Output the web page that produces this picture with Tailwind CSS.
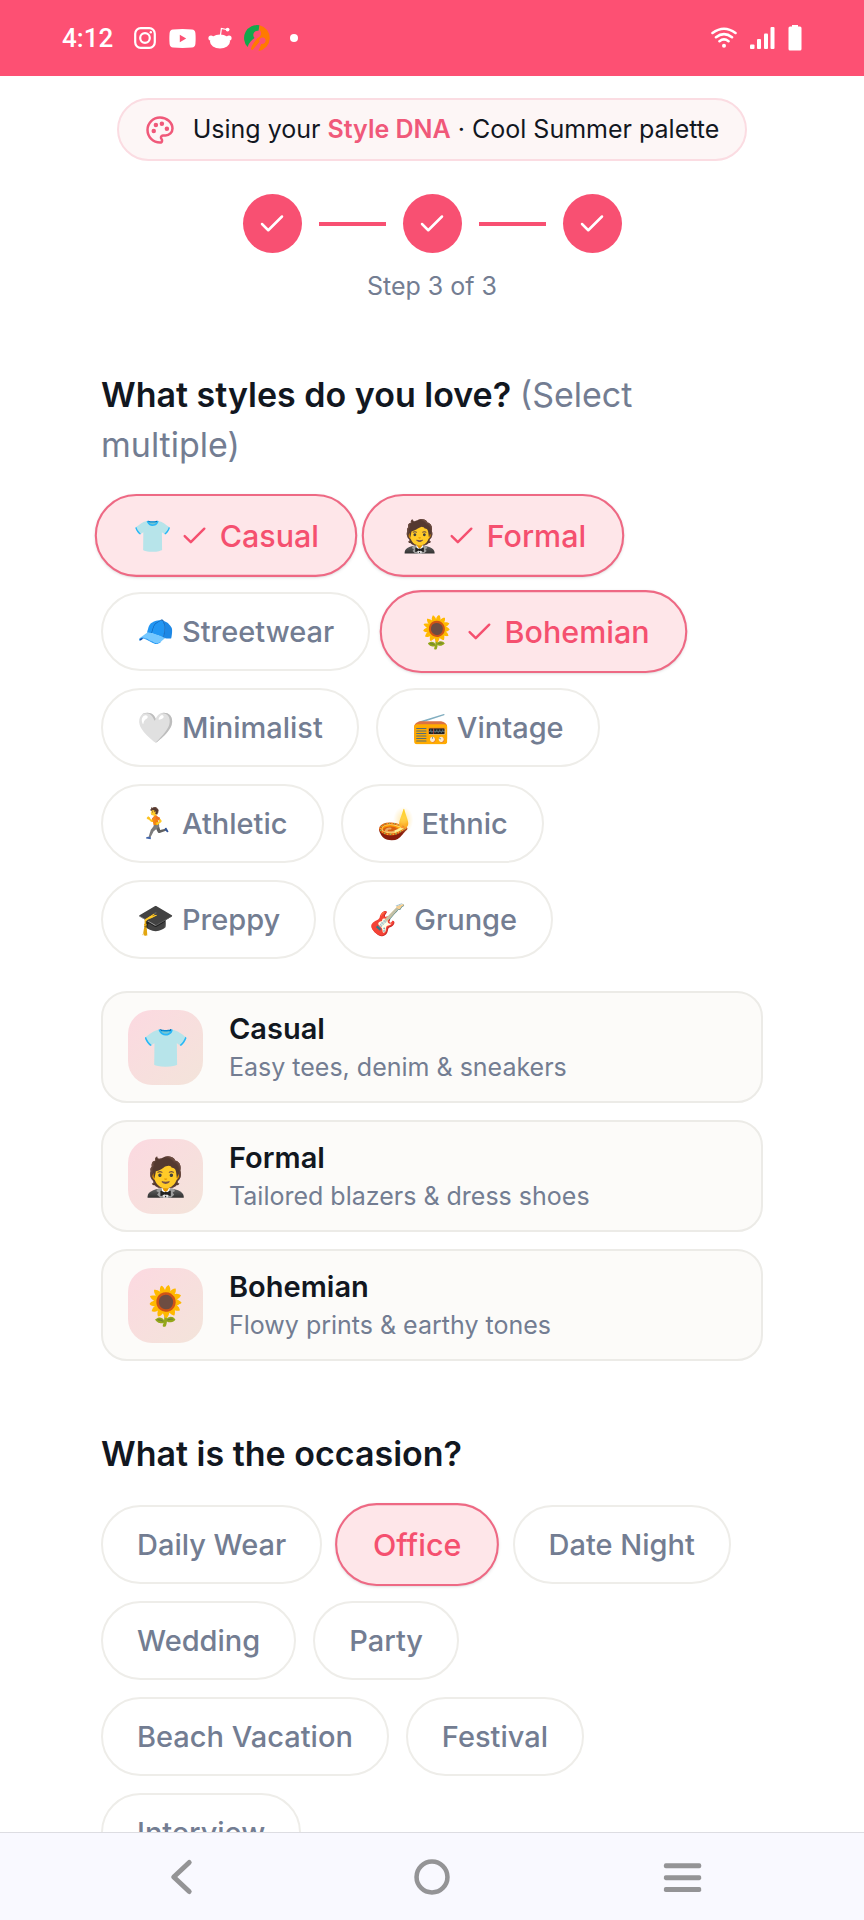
<!DOCTYPE html>
<html lang="en">
<head>
  <meta charset="UTF-8" />
  <meta name="viewport" content="width=device-width, initial-scale=1" />
  <title>Style Quiz</title>
  <script src="https://cdn.jsdelivr.net/npm/@tailwindcss/browser@4"></script>
</head>
<body class="flex h-screen flex-col overflow-hidden bg-white font-['Inter',sans-serif] text-[#12171f]">

  <!-- Shared shapes -->
  <svg class="hidden" aria-hidden="true">
    <symbol id="check" viewBox="0 0 24 24">
      <path d="M20 6 9 17l-5-5" fill="none" stroke="currentColor" stroke-width="2" stroke-linecap="round" stroke-linejoin="round" />
    </symbol>
  </svg>

  <!-- Status bar -->
  <header class="flex h-[76px] shrink-0 items-center justify-between bg-[#fd5073] px-[62px] text-white">
    <div class="flex items-center">
      <span class="font-['Roboto',sans-serif] text-[26px] leading-8 font-medium">4:12</span>
      <svg class="ml-5 size-6" viewBox="0 0 24 24" fill="none" stroke="currentColor" stroke-width="2.2">
        <rect x="2.2" y="2.2" width="19.6" height="19.6" rx="5.5" />
        <circle cx="12" cy="12" r="4.8" />
        <circle cx="17.8" cy="6.2" r="1.2" fill="currentColor" stroke="none" />
      </svg>
      <svg class="ml-3 h-[19px] w-[27px]" viewBox="0 0 27 19" fill="currentColor">
        <path fill-rule="evenodd" d="M4 .5Q13.5-.3 23 .5 26 .8 26.400 4 26.900 9.500 26.400 15 26 18.200 23 18.500 13.500 19.300 4 18.500 1 18.200.6 15 .1 9.500.6 4 1 .8 4 .5ZM10.800 5.800v7.400l6.400-3.700Z" />
      </svg>
      <svg class="ml-3 size-6" viewBox="0 0 24 24" fill="currentColor">
        <ellipse cx="12" cy="15.500" rx="10" ry="7" />
        <circle cx="3" cy="12" r="2.600" />
        <circle cx="21" cy="12" r="2.600" />
        <path d="M12.500 9 13.400 2.500 18.500 3.500" fill="none" stroke="currentColor" stroke-width="1.200" />
        <circle cx="19.600" cy="3.600" r="1.900" />
      </svg>
      <svg class="ml-3 size-[26px]" viewBox="0 0 26 26">
        <path d="M15.500.3A13 13 0 0 0 3.600 22C5 17.500 7.500 15.500 10.500 13 7.500 9.500 10.500 5 14.500 5.800Z" fill="#12a84c" />
        <path d="M15.500.3A13 13 0 0 1 14.500 25.900L17.200 19C21.500 19.500 23.200 14.500 20 12.800 17.200 11.500 14.500 14 15.600 16.800L8.500 25 6.800 24.200C8 20 10.500 16.500 13.500 13 17 12 18.500 7.500 15.500 5Z" fill="#ff7a00" />
      </svg>
      <span class="ml-5 size-2 rounded-full bg-white"></span>
    </div>
    <div class="flex items-center gap-[13px]">
      <svg class="h-[22px] w-[26px]" viewBox="0 0 26 22" fill="none" stroke="currentColor" stroke-width="2.600" stroke-linecap="round">
        <path d="M1.500 6Q13-2.500 24.500 6M5 10.200Q13 4 21 10.200M8.500 14.200Q13 10.600 17.500 14.200" />
        <circle cx="13" cy="18.700" r="2" fill="currentColor" stroke="none" />
      </svg>
      <svg class="h-[22px] w-[25px]" viewBox="0 0 25 22" fill="currentColor">
        <rect y="17.500" width="4.500" height="4.500" rx="1" />
        <rect x="7" y="12" width="4" height="10" rx="1" />
        <rect x="14" y="6.500" width="4" height="15.500" rx="1" />
        <rect x="20.500" width="4" height="22" rx="1" />
      </svg>
      <svg class="h-[26px] w-[14px]" viewBox="0 0 14 26" fill="currentColor">
        <path d="M4 0h6v1.500H12a1.500 1.500 0 0 1 1.500 1.500V24a1.500 1.500 0 0 1-1.500 1.500H2A1.500 1.500 0 0 1 .5 24V3A1.500 1.500 0 0 1 2 1.500H4Z" />
      </svg>
    </div>
  </header>

  <main class="min-h-0 flex-1 overflow-hidden px-[101px] pt-[22px]">

    <!-- Style DNA banner -->
    <div class="mx-auto flex h-[63px] w-fit items-center gap-[18px] rounded-full border-2 border-[#fbdce2] bg-[#fdf6f6] px-[26px] text-[25px] whitespace-nowrap">
      <svg class="size-[30px] text-[#f0597a]" viewBox="0 0 24 24" fill="none" stroke="currentColor" stroke-width="2" stroke-linecap="round" stroke-linejoin="round">
        <path d="M12 2C6.500 2 2 6.500 2 12s4.500 10 10 10c.926 0 1.648-.746 1.648-1.688 0-.437-.18-.835-.437-1.125-.29-.289-.438-.652-.438-1.125a1.640 1.640 0 0 1 1.668-1.668h1.996c3.051 0 5.555-2.503 5.555-5.554C21.965 6.012 17.461 2 12 2z" />
        <circle cx="13.500" cy="7" r=".8" fill="currentColor" />
        <circle cx="17.500" cy="11" r=".8" fill="currentColor" />
        <circle cx="8.700" cy="8" r=".8" fill="currentColor" />
        <circle cx="7" cy="12.700" r=".8" fill="currentColor" />
      </svg>
      <p>Using your <span class="font-semibold text-[#f0597a]">Style DNA</span> · Cool Summer palette</p>
    </div>

    <!-- Progress -->
    <div class="mt-[33px] flex items-center justify-center gap-[17px] text-white">
      <span class="grid size-[59px] place-items-center rounded-full bg-[#f85072]"><svg class="size-[30px]"><use href="#check" /></svg></span>
      <span class="h-1 w-[67px] bg-[#f85072]"></span>
      <span class="grid size-[59px] place-items-center rounded-full bg-[#f85072]"><svg class="size-[30px]"><use href="#check" /></svg></span>
      <span class="h-1 w-[67px] bg-[#f85072]"></span>
      <span class="grid size-[59px] place-items-center rounded-full bg-[#f85072]"><svg class="size-[30px]"><use href="#check" /></svg></span>
    </div>
    <p class="mt-[15px] text-center text-[25px] leading-9 text-[#737d92]">Step 3 of 3</p>

    <!-- Styles -->
    <section class="mt-[66px]">
      <h2 class="text-[34px] leading-[50px] font-semibold">What styles do you love? <span class="font-normal text-[#737d92]">(Select multiple)</span></h2>
      <div class="mt-[26px] flex flex-wrap gap-[17px] text-[29px] leading-[43px] font-medium text-[#737d92]">
        <button type="button" aria-pressed="true" class="flex h-[79px] scale-105 items-center rounded-full border-2 border-[#ee6984] bg-[#fee6e9] px-[34px] text-[#f5506f] shadow-sm"><span class="mr-2 text-[30px]">👕</span><svg class="mr-[10px] size-7"><use href="#check" /></svg>Casual</button>
        <button type="button" aria-pressed="true" class="flex h-[79px] scale-105 items-center rounded-full border-2 border-[#ee6984] bg-[#fee6e9] px-[34px] text-[#f5506f] shadow-sm"><span class="mr-2 text-[30px]">🤵</span><svg class="mr-[10px] size-7"><use href="#check" /></svg>Formal</button>
        <button type="button" aria-pressed="false" class="flex h-[79px] items-center rounded-full border-2 border-[#eeede9] px-[34px]"><span class="mr-2 text-[30px]">🧢</span>Streetwear</button>
        <button type="button" aria-pressed="true" class="flex h-[79px] scale-105 items-center rounded-full border-2 border-[#ee6984] bg-[#fee6e9] px-[34px] text-[#f5506f] shadow-sm"><span class="mr-2 text-[30px]">🌻</span><svg class="mr-[10px] size-7"><use href="#check" /></svg>Bohemian</button>
        <button type="button" aria-pressed="false" class="flex h-[79px] items-center rounded-full border-2 border-[#eeede9] px-[34px]"><span class="mr-2 text-[30px]">🤍</span>Minimalist</button>
        <button type="button" aria-pressed="false" class="flex h-[79px] items-center rounded-full border-2 border-[#eeede9] px-[34px]"><span class="mr-2 text-[30px]">📻</span>Vintage</button>
        <button type="button" aria-pressed="false" class="flex h-[79px] items-center rounded-full border-2 border-[#eeede9] px-[34px]"><span class="mr-2 text-[30px]">🏃</span>Athletic</button>
        <button type="button" aria-pressed="false" class="flex h-[79px] items-center rounded-full border-2 border-[#eeede9] px-[34px]"><span class="mr-2 text-[30px]">🪔</span>Ethnic</button>
        <button type="button" aria-pressed="false" class="flex h-[79px] items-center rounded-full border-2 border-[#eeede9] px-[34px]"><span class="mr-2 text-[30px]">🎓</span>Preppy</button>
        <button type="button" aria-pressed="false" class="flex h-[79px] items-center rounded-full border-2 border-[#eeede9] px-[34px]"><span class="mr-2 text-[30px]">🎸</span>Grunge</button>
      </div>

      <ul class="mt-8 flex flex-col gap-[17px]">
        <li class="flex h-[112px] items-center gap-[26px] rounded-[26px] border-2 border-[#ecebe7] bg-[#fcfbf9] px-[25px]">
          <span class="grid size-[75px] place-items-center rounded-[24px] bg-linear-to-br from-[#fcd9e1] to-[#f3e4da] text-[38px]">👕</span>
          <div>
            <h3 class="text-[29px] leading-[40px] font-semibold">Casual</h3>
            <p class="text-[25px] leading-[36px] text-[#737d92]">Easy tees, denim &amp; sneakers</p>
          </div>
        </li>
        <li class="flex h-[112px] items-center gap-[26px] rounded-[26px] border-2 border-[#ecebe7] bg-[#fcfbf9] px-[25px]">
          <span class="grid size-[75px] place-items-center rounded-[24px] bg-linear-to-br from-[#fcd9e1] to-[#f3e4da] text-[38px]">🤵</span>
          <div>
            <h3 class="text-[29px] leading-[40px] font-semibold">Formal</h3>
            <p class="text-[25px] leading-[36px] text-[#737d92]">Tailored blazers &amp; dress shoes</p>
          </div>
        </li>
        <li class="flex h-[112px] items-center gap-[26px] rounded-[26px] border-2 border-[#ecebe7] bg-[#fcfbf9] px-[25px]">
          <span class="grid size-[75px] place-items-center rounded-[24px] bg-linear-to-br from-[#fcd9e1] to-[#f3e4da] text-[38px]">🌻</span>
          <div>
            <h3 class="text-[29px] leading-[40px] font-semibold">Bohemian</h3>
            <p class="text-[25px] leading-[36px] text-[#737d92]">Flowy prints &amp; earthy tones</p>
          </div>
        </li>
      </ul>
    </section>

    <!-- Occasion -->
    <section class="mt-[68px]">
      <h2 class="text-[34px] leading-[50px] font-semibold">What is the occasion?</h2>
      <div class="mt-[26px] flex flex-wrap gap-[17px] pr-2 text-[29px] leading-[43px] font-medium text-[#737d92]">
        <button type="button" aria-pressed="false" class="h-[79px] rounded-full border-2 border-[#eeede9] px-[34px]">Daily Wear</button>
        <button type="button" aria-pressed="true" class="h-[79px] scale-105 rounded-full border-2 border-[#ee6984] bg-[#fee6e9] px-[34px] text-[#f5506f] shadow-sm">Office</button>
        <button type="button" aria-pressed="false" class="h-[79px] rounded-full border-2 border-[#eeede9] px-[34px]">Date Night</button>
        <button type="button" aria-pressed="false" class="h-[79px] rounded-full border-2 border-[#eeede9] px-[34px]">Wedding</button>
        <button type="button" aria-pressed="false" class="h-[79px] rounded-full border-2 border-[#eeede9] px-[34px]">Party</button>
        <button type="button" aria-pressed="false" class="h-[79px] rounded-full border-2 border-[#eeede9] px-[34px]">Beach Vacation</button>
        <button type="button" aria-pressed="false" class="h-[79px] rounded-full border-2 border-[#eeede9] px-[34px]">Festival</button>
        <button type="button" aria-pressed="false" class="h-[79px] rounded-full border-2 border-[#eeede9] px-[34px]">Interview</button>
      </div>
    </section>
  </main>

  <!-- System navigation -->
  <nav class="flex h-[88px] shrink-0 items-center justify-between border-t border-[#dddde2] bg-[#f9f9ff] px-[161px] text-[#949496]">
    <button type="button" aria-label="Back" class="grid size-10 place-items-center">
      <svg class="size-10" viewBox="0 0 44 44" fill="none" stroke="currentColor" stroke-width="5.500" stroke-linecap="round" stroke-linejoin="round"><path d="M31 6 14 22 31 38" /></svg>
    </button>
    <button type="button" aria-label="Home" class="grid size-10 place-items-center">
      <svg class="size-10" viewBox="0 0 44 44" fill="none" stroke="currentColor" stroke-width="5"><circle cx="22" cy="22" r="17" /></svg>
    </button>
    <button type="button" aria-label="Recent apps" class="grid size-10 place-items-center">
      <svg class="size-10" viewBox="0 0 44 44" fill="currentColor"><rect x="1" y="7" width="41" height="5.500" rx="2" /><rect x="1" y="20" width="41" height="5.500" rx="2" /><rect x="1" y="33" width="41" height="5.500" rx="2" /></svg>
    </button>
  </nav>
</body>
</html>
